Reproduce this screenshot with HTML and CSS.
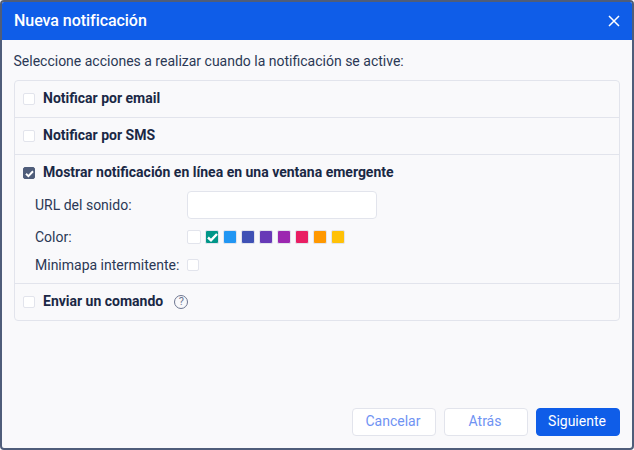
FILE: index.html
```html
<!DOCTYPE html>
<html lang="es">
<head>
<meta charset="utf-8">
<title>Nueva notificación</title>
<link rel="stylesheet" href="styles.css">
</head>
<body>
<div class="dialog">
  <header class="head">
    <h1 class="title">Nueva notificación</h1>
    <svg class="close" width="12" height="12" viewBox="0 0 12 12"><path d="M1 1l10 10M11 1L1 11" stroke="#fff" stroke-width="1.5" fill="none"/></svg>
  </header>
  <main class="body">
    <p class="intro">Seleccione acciones a realizar cuando la notificación se active:</p>
    <div class="panel">
      <section class="row">
        <div class="line"><span class="check"></span><span class="label">Notificar por email</span></div>
      </section>
      <section class="row">
        <div class="line"><span class="check"></span><span class="label">Notificar por SMS</span></div>
      </section>
      <section class="row row-open">
        <div class="line">
          <span class="check check-on"><svg width="13" height="13" viewBox="0 0 13 13"><path d="M3 6.8l2.4 2.3L10 4.3" stroke="#fff" stroke-width="2" fill="none"/></svg></span>
          <span class="label">Mostrar notificación en línea en una ventana emergente</span>
        </div>
        <div class="fields">
          <span class="fname fname-url">URL del sonido:</span>
          <input class="text-input" type="text" aria-label="URL del sonido">
          <span class="fname">Color:</span>
          <div class="swatches">
            <span class="swatch sw-white"></span>
            <span class="swatch sw-teal"><svg width="13" height="13" viewBox="0 0 13 13"><path d="M2 6.5l3 2.8L11 3" stroke="#fff" stroke-width="2.4" fill="none"/></svg></span>
            <span class="swatch sw-blue"></span>
            <span class="swatch sw-indigo"></span>
            <span class="swatch sw-deep"></span>
            <span class="swatch sw-purple"></span>
            <span class="swatch sw-pink"></span>
            <span class="swatch sw-orange"></span>
            <span class="swatch sw-amber"></span>
          </div>
          <span class="fname">Minimapa intermitente:</span>
          <span class="check check-small"></span>
        </div>
      </section>
      <section class="row row-last">
        <div class="line">
          <span class="check"></span><span class="label">Enviar un comando</span>
          <span class="help">?</span>
        </div>
      </section>
    </div>
  </main>
  <footer class="foot">
    <button class="btn" type="button">Cancelar</button>
    <button class="btn" type="button">Atrás</button>
    <button class="btn btn-primary" type="button">Siguiente</button>
  </footer>
</div>
</body>
</html>
```
FILE: styles.css
```css
* { box-sizing: border-box; }
html, body { margin: 0; height: 100%; }
body {
  background: #fff;
  font-family: Roboto, "Liberation Sans", sans-serif;
  color: #1a2845;
}
.dialog {
  width: 634px;
  height: 450px;
  display: flex;
  flex-direction: column;
  border: 2px solid #4f5d7a;
  border-radius: 4px;
  background: #f9f9fb;
  overflow: hidden;
}
.head {
  height: 38px;
  flex: none;
  background: #0f5de8;
  display: flex;
  align-items: center;
  justify-content: space-between;
  padding: 0 12px;
}
.title {
  margin: 0;
  font-size: 16px;
  font-weight: 500;
  letter-spacing: -0.05px;
  color: #fff;
  line-height: 20px;
}
.close { display: block; }
.body {
  flex: 1;
  padding: 13px 12px 0;
}
.intro {
  margin: 0 0 11px;
  font-size: 14px;
  line-height: 16px;
  color: #2b3855;
  transform: translateX(-0.5px);
}
.panel {
  border: 1px solid #e2e4ec;
  border-radius: 4px;
  width: 606px;
}
.row { border-bottom: 1px solid #e2e4ec; height: 37px; }
.row-open { height: 129px; }
.row-last { border-bottom: 0; height: 36px; }
.line {
  display: flex;
  align-items: center;
  height: 36px;
  padding-left: 8px;
}
.check {
  width: 12px;
  height: 12px;
  flex: none;
  background: #fff;
  border: 1px solid #e2e4ec;
  border-radius: 2px;
  display: flex;
  align-items: center;
  justify-content: center;
}
.check-on { background: #4f5d7a; border-color: #4f5d7a; }
.check-on svg { flex: none; }
.label {
  margin-left: 8px;
  padding-bottom: 2px;
  font-size: 14px;
  font-weight: 700;
  color: #1a2845;
  line-height: 16px;
  white-space: nowrap;
}
.fields {
  display: grid;
  grid-template-columns: 152px 1fr;
  grid-template-rows: 28px 36px 20px;
  align-items: center;
  padding-left: 20px;
  font-size: 14px;
  color: #2b3855;
}
.fname { line-height: 16px; white-space: nowrap; color: #2b3855; }
.text-input {
  width: 190px;
  height: 28px;
  background: #fff;
  border: 1px solid #e2e4ec;
  border-radius: 4px;
  padding: 0;
  outline: 0;
}
.swatches { display: flex; gap: 4px; }
.swatch {
  width: 14px;
  height: 14px;
  border: 1px solid #e2e4ec;
  border-radius: 2px;
  display: flex;
  align-items: center;
  justify-content: center;
}
.swatch svg { flex: none; }
.sw-white { background: #fff; }
.sw-teal { background: #009688; }
.sw-blue { background: #2196f3; }
.sw-indigo { background: #3f51b5; }
.sw-deep { background: #673ab7; }
.sw-purple { background: #9c27b0; }
.sw-pink { background: #e91e63; }
.sw-orange { background: #ff9800; }
.sw-amber { background: #ffc107; }
.help {
  margin-left: 11px;
  width: 14px;
  height: 14px;
  border: 1px solid #6d7691;
  border-radius: 50%;
  font-size: 11px;
  line-height: 12px;
  text-align: center;
  color: #6d7691;
}
.foot {
  flex: none;
  display: flex;
  justify-content: flex-end;
  gap: 8px;
  padding: 0 12px 12px;
}
.btn {
  width: 84px;
  height: 28px;
  border: 1px solid #e2e4ec;
  border-radius: 4px;
  background: #fff;
  color: #6f93f3;
  font: 400 14px/16px Roboto, "Liberation Sans", sans-serif;
  padding: 0 2px 2px 0;
}
.btn-primary {
  background: #0f5de8;
  border-color: #0f5de8;
  color: #fff;
}
```
